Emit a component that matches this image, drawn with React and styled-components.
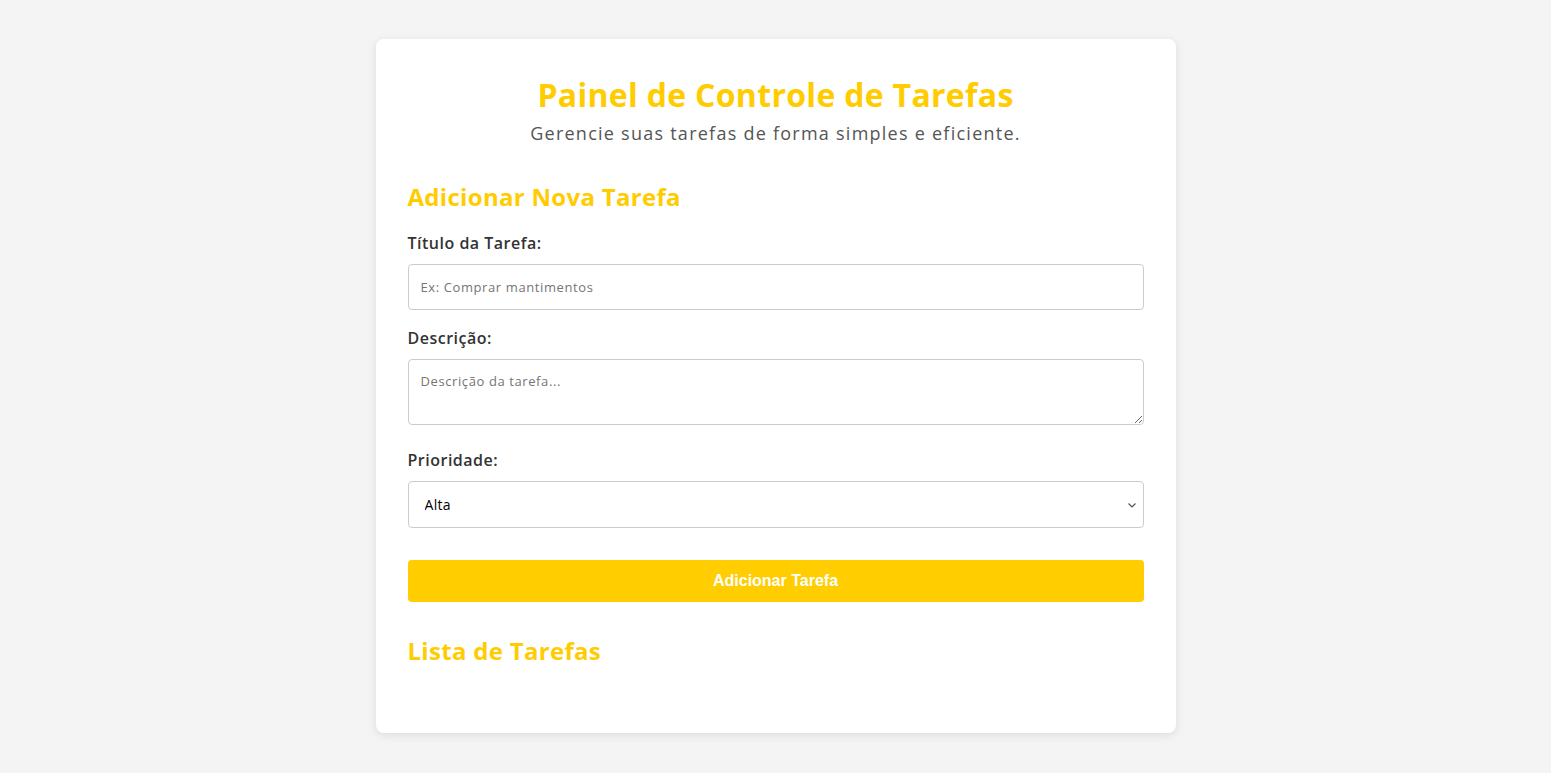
import * as React from "react";
import styled, { createGlobalStyle } from "styled-components";

const GlobalStyle = createGlobalStyle`
  body {
    margin: 0;
    padding: 39px 0 40px;
    background: #f4f4f4;
    font-family: "Open Sans", "DejaVu Sans", sans-serif;
    color: #333;
  }
  * { box-sizing: border-box; }
`;

const Card = styled.div`
  width: 800px;
  margin: 0 auto;
  background: #fff;
  border-radius: 8px;
  padding: 32px;
  box-shadow: 0 2px 10px rgba(0, 0, 0, 0.1);
`;

const Header = styled.header`
  text-align: center;
  margin-bottom: 32px;
`;

const Title = styled.h1`
  margin: 0;
  font-size: 32px;
  line-height: 48px;
  font-weight: 700;
  letter-spacing: 0.3px;
  color: #ffcc00;
`;

const Subtitle = styled.p`
  margin: 0;
  font-size: 18px;
  line-height: 28px;
  letter-spacing: 1.25px;
  color: #555;
`;

const SectionTitle = styled.h2`
  margin: 0 0 ${(p) => p.$gap ?? 16}px;
  font-size: 24px;
  line-height: 36px;
  font-weight: 700;
  letter-spacing: 0.3px;
  color: #ffcc00;
`;

const Field = styled.div`
  display: flex;
  flex-direction: column;
  margin-bottom: ${(p) => p.$gap ?? 16}px;
`;

const Label = styled.label`
  font-size: 16px;
  line-height: 24px;
  font-weight: 600;
  letter-spacing: 0.5px;
  color: #333;
  margin-bottom: 9px;
`;

const inputBase = `
  width: 100%;
  border: 1px solid #ccc;
  border-radius: 4px;
  font-family: "Open Sans", "DejaVu Sans", sans-serif;
  font-size: 13px;
  letter-spacing: 0.6px;
  color: #000;
  background: #fff;
  &::placeholder { color: #757575; }
`;

const Input = styled.input`
  ${inputBase}
  height: 46px;
  padding: 0 12px;
`;

const TextArea = styled.textarea`
  ${inputBase}
  display: block;
  height: 66px;
  padding: 12px;
  resize: vertical;
`;

const SelectWrap = styled.div`
  position: relative;
`;

const Select = styled.select`
  ${inputBase}
  appearance: none;
  height: 47px;
  padding: 0 12px 0 16px;
  font-size: 14px;
  letter-spacing: 0.3px;
`;

const Chevron = styled.svg`
  position: absolute;
  right: 7px;
  top: 50%;
  width: 10px;
  height: 10px;
  margin-top: -5px;
  pointer-events: none;
`;

const SubmitButton = styled.button`
  display: block;
  width: 100%;
  height: 42px;
  margin-top: 32px;
  margin-bottom: 31px;
  border: none;
  border-radius: 4px;
  background: #ffcd00;
  color: #fff;
  font-family: "Liberation Sans", Arial, sans-serif;
  font-size: 16px;
  font-weight: 700;
  cursor: pointer;
`;

const TaskList = styled.ul`
  list-style: none;
  margin: 0;
  padding: 0;
  min-height: 32px;
`;

export default function App() {
  return (
    <>
      <GlobalStyle />
      <Card>
        <Header>
          <Title>Painel de Controle de Tarefas</Title>
          <Subtitle>Gerencie suas tarefas de forma simples e eficiente.</Subtitle>
        </Header>

        <SectionTitle>Adicionar Nova Tarefa</SectionTitle>
        <form onSubmit={(e) => e.preventDefault()}>
          <Field>
            <Label htmlFor="titulo">Título da Tarefa:</Label>
            <Input id="titulo" type="text" placeholder="Ex: Comprar mantimentos" />
          </Field>
          <Field $gap={23}>
            <Label htmlFor="descricao">Descrição:</Label>
            <TextArea id="descricao" placeholder="Descrição da tarefa..." />
          </Field>
          <Field $gap={0}>
            <Label htmlFor="prioridade">Prioridade:</Label>
            <SelectWrap>
              <Select id="prioridade" defaultValue="alta">
                <option value="alta">Alta</option>
                <option value="media">Média</option>
                <option value="baixa">Baixa</option>
              </Select>
              <Chevron viewBox="0 0 10 10" aria-hidden="true">
                <path d="M1.5 3.5 L5 7 L8.5 3.5" fill="none" stroke="#555" strokeWidth="1.2" />
              </Chevron>
            </SelectWrap>
          </Field>
          <SubmitButton type="submit">Adicionar Tarefa</SubmitButton>
        </form>

        <SectionTitle $gap={0}>Lista de Tarefas</SectionTitle>
        <TaskList />
      </Card>
    </>
  );
}
